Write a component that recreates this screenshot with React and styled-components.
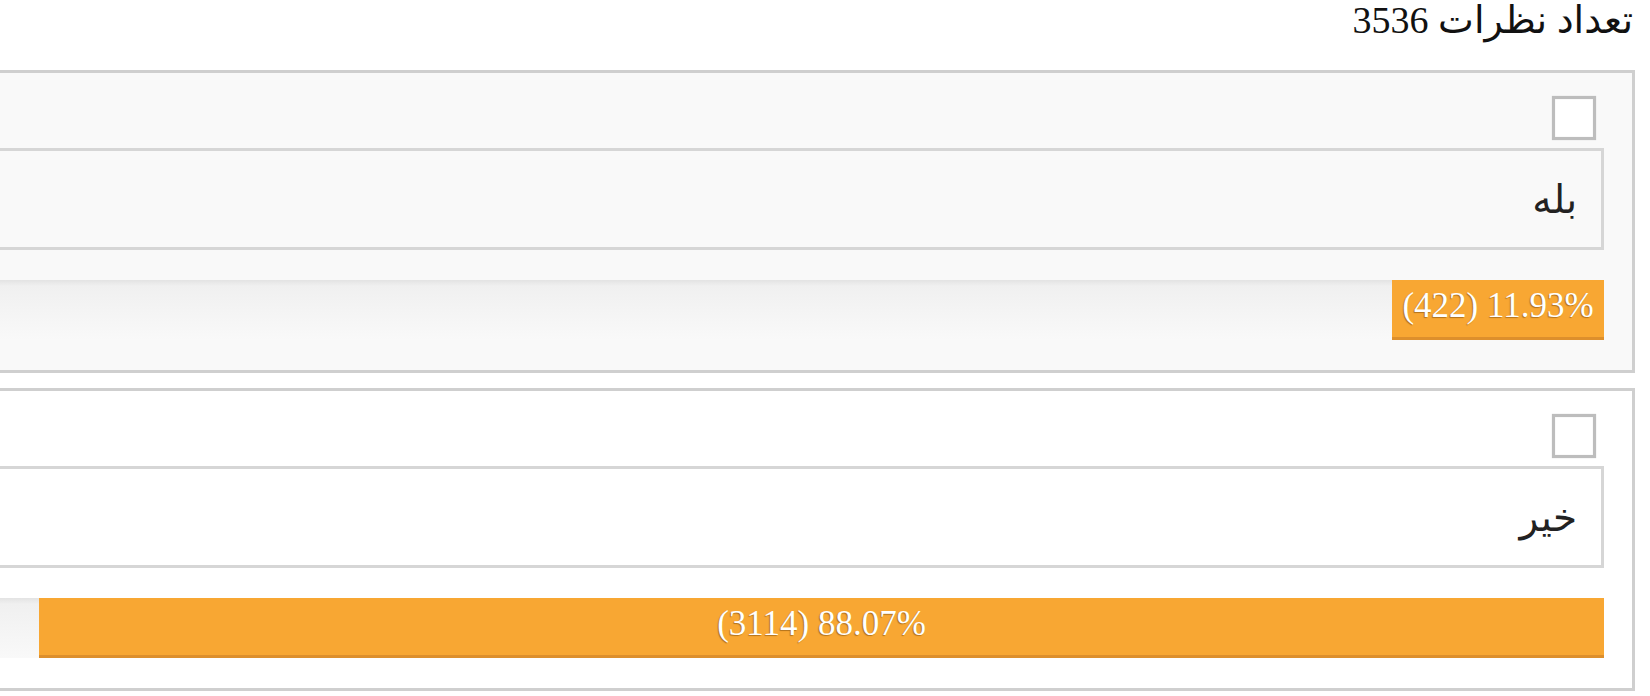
//  libraries
import styled, { createGlobalStyle } from "styled-components";

const GlobalStyle = createGlobalStyle`
  html, body {
    margin: 0;
    padding: 0;
    overflow: hidden;
    background: #ffffff;
  }
  body {
    direction: rtl;
    font-family: "Liberation Serif", "DejaVu Sans", serif;
    color: #222222;
  }
`;

const Page = styled.div`
  width: 1839px;
  margin-right: 15px;
`;

const Title = styled.h2`
  margin: 0 0 30px 0;
  padding-right: 2px;
  font-size: 38px;
  font-weight: normal;
  line-height: 40px;
  color: #111111;
`;

const Panel = styled.div`
  display: flex;
  flex-direction: column;
  border: 3px solid #cfcfcf;
  background-color: ${({ $shaded }) => ($shaded ? "#f9f9f9" : "#ffffff")};
  padding: 23px 28px 30px 28px;
  margin-bottom: 15px;
`;

const Check = styled.input.attrs({ type: "checkbox" })`
  appearance: none;
  margin: 0 8px 8px 0;
  width: 44px;
  height: 44px;
  border: 3px solid #bdbdbd;
  box-shadow: 0 0 1px #cccccc, inset 0 0 1px #cccccc;
  background-color: #ffffff;
  box-sizing: border-box;
  align-self: flex-start;
`;

const Answer = styled.div`
  display: flex;
  align-items: center;
  height: 102px;
  box-sizing: border-box;
  border: 3px solid #d6d6d6;
  padding: 0 24px;
  font-size: 39px;
  color: #222222;
`;

const Track = styled.div`
  display: flex;
  margin-top: 30px;
  height: 60px;
  background: linear-gradient(to bottom, #efefef, #f9f9f9);
  box-shadow: inset 0 3px 4px rgba(0, 0, 0, 0.05);
`;

const Fill = styled.div`
  height: 57px;
  border-bottom: 3px solid #dd8f2c;
  background-color: #f8a733;
  color: #ffffff;
  font-size: 35px;
  line-height: 52px;
  text-align: center;
  white-space: nowrap;
  direction: ltr;
  text-shadow: -1px 1px 1px rgba(90, 50, 0, 0.45);
`;

const options = [
  { title: "بله", votes: 422 },
  { title: "خیر", votes: 3114 },
];

const App = () => {
  const total = options.reduce((sum, o) => sum + o.votes, 0);

  return (
    <Page>
      <GlobalStyle />
      <Title>تعداد نظرات {total}</Title>
      {options.map((option, i) => {
        const pct = ((option.votes / total) * 100).toFixed(2);
        return (
          <Panel key={option.title} $shaded={i % 2 === 0}>
            <Check />
            <Answer>{option.title}</Answer>
            <Track>
              <Fill style={{ width: `${pct}%` }}>
                ({option.votes}) {pct}%
              </Fill>
            </Track>
          </Panel>
        );
      })}
    </Page>
  );
};

export default App;
